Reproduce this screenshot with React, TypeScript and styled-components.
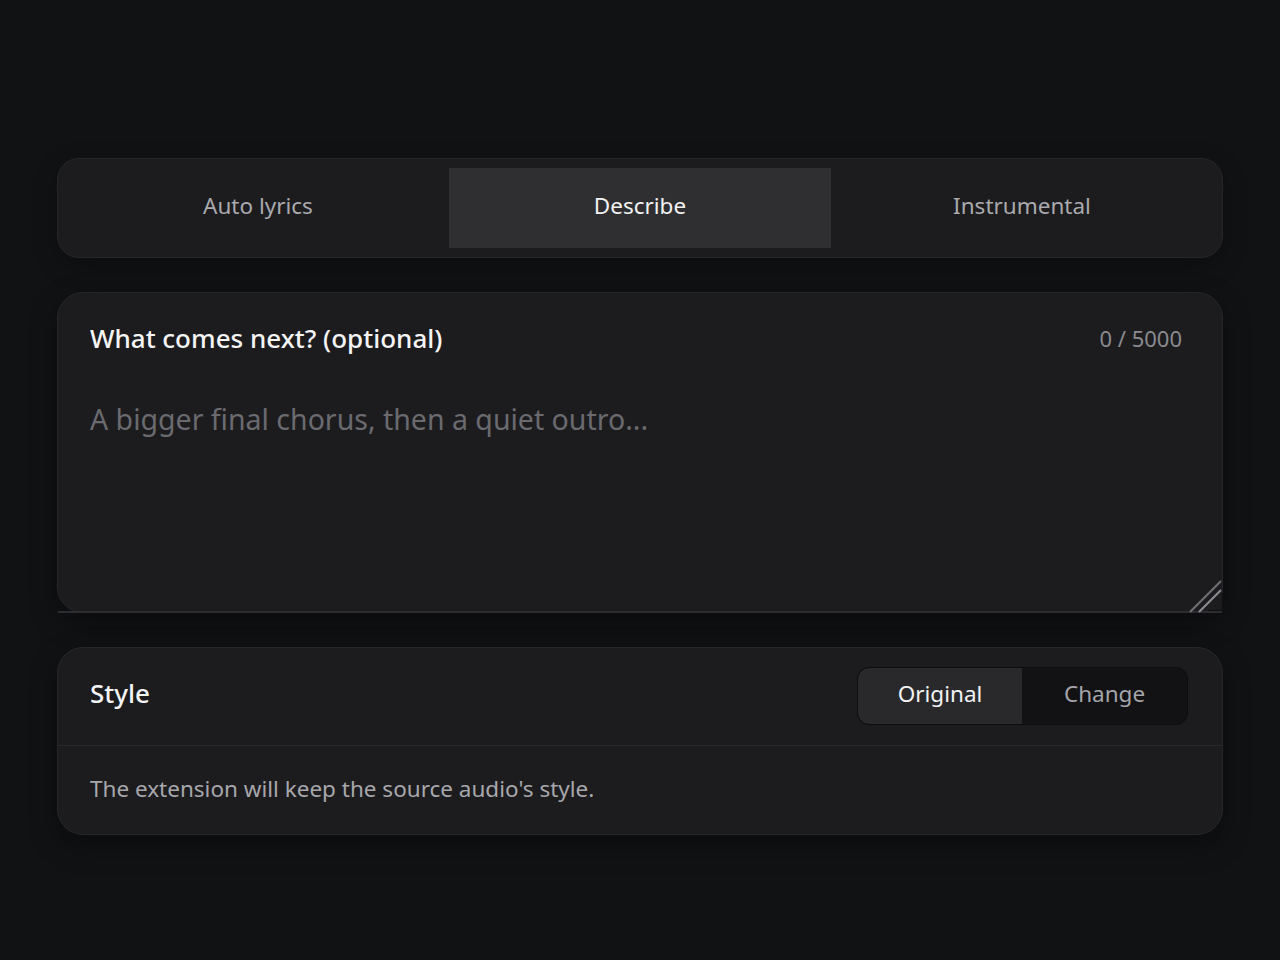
import { useState } from 'react';
import styled, { createGlobalStyle } from 'styled-components';

const GlobalStyle = createGlobalStyle`
  html, body {
    margin: 0;
    padding: 0;
    background: #111214;
    font-family: "Noto Sans", "Open Sans", sans-serif;
    -webkit-font-smoothing: antialiased;
  }
`;

const Page = styled.main`
  min-height: 960px;
  box-sizing: border-box;
  padding: 158px 57px;
  display: flex;
  flex-direction: column;
  gap: 34px;
`;

const TabBar = styled.div`
  display: grid;
  grid-template-columns: repeat(3, 1fr);
  padding: 9px;
  border: 1px solid #26272a;
  border-radius: 22px;
  background: #1c1c1f;
  box-shadow: 0 8px 24px rgba(0, 0, 0, 0.25);
`;

const Tab = styled.button<{ $active?: boolean }>`
  height: 80px;
  padding: 0 0 5px;
  border: none;
  border-radius: 0;
  background: ${(p) => (p.$active ? '#2f2f32' : 'transparent')};
  color: ${(p) => (p.$active ? '#f2f2f3' : '#a9a9ae')};
  font-family: inherit;
  font-size: 22.5px;
  cursor: pointer;
`;

const Card = styled.section`
  position: relative;
  border: 1px solid #26272a;
  border-radius: 26px;
  background: #1c1c1f;
  box-shadow: 0 10px 28px rgba(0, 0, 0, 0.35);
`;

const FieldHeader = styled.div`
  display: flex;
  align-items: center;
  justify-content: space-between;
  padding: 29px 40px 0 32px;
  height: 32px;
`;

const Title = styled.h2`
  margin: 0;
  font-size: 26px;
  font-weight: 500;
  color: #f4f4f5;
`;

const StyleTitle = styled(Title)`
  margin-bottom: 6px;
`;

const Counter = styled.span`
  font-size: 22px;
  color: #8a8a8f;
`;

const Input = styled.textarea`
  display: block;
  box-sizing: border-box;
  width: 100%;
  height: 227px;
  margin-top: 32px;
  margin-bottom: -1px;
  padding: 14px 32px;
  border: none;
  border-bottom: 2px solid #2d2d31;
  background: transparent;
  color: #f4f4f5;
  font-family: inherit;
  font-size: 28.5px;
  line-height: 38px;
  resize: vertical;
  outline: none;
  color-scheme: dark;

  &::placeholder {
    color: #6a6a6f;
  }
`;

const Grip = styled.svg`
  position: absolute;
  right: 0;
  bottom: -1px;
  width: 34px;
  height: 34px;
  pointer-events: none;
`;

const StyleHeader = styled.div`
  display: flex;
  align-items: center;
  justify-content: space-between;
  padding: 19px 34px 20px 32px;
  border-bottom: 1px solid #2a2a2e;
`;

const Segmented = styled.div`
  display: grid;
  grid-template-columns: 164px 165px;
  border: 1px solid #0d0d0f;
  border-radius: 12px;
  background: #121214;
  overflow: hidden;
`;

const Segment = styled.button<{ $active?: boolean }>`
  height: 56px;
  padding: 0 0 6px;
  border: none;
  border-radius: ${(p) => (p.$active ? '11px 0 0 11px' : '0')};
  background: ${(p) => (p.$active ? '#29292c' : 'transparent')};
  color: ${(p) => (p.$active ? '#f2f2f3' : '#a4a4a9')};
  font-family: inherit;
  font-size: 22.5px;
  cursor: pointer;
`;

const Note = styled.p`
  margin: 0;
  padding: 27px 32px 29px;
  font-size: 22.5px;
  line-height: 32px;
  color: #a7a7ac;
`;

const tabs = ['Auto lyrics', 'Describe', 'Instrumental'];

export default function App() {
  const [tab, setTab] = useState('Describe');
  const [style, setStyle] = useState('Original');
  const [text, setText] = useState('');

  return (
    <>
      <GlobalStyle />
      <Page>
        <TabBar>
          {tabs.map((t) => (
            <Tab key={t} $active={t === tab} onClick={() => setTab(t)}>
              {t}
            </Tab>
          ))}
        </TabBar>

        <Card>
          <FieldHeader>
            <Title>What comes next? (optional)</Title>
            <Counter>{text.length} / 5000</Counter>
          </FieldHeader>
          <Input
            value={text}
            maxLength={5000}
            placeholder="A bigger final chorus, then a quiet outro..."
            onChange={(e) => setText(e.target.value)}
          />
          {/* larger resize grip drawn over the native one */}
          <Grip viewBox="0 0 34 34">
            <rect x="14" y="14" width="20" height="17" fill="#1c1c1f" />
            <path d="M2 33 L33 2" stroke="#6e6e72" strokeWidth="2.2" />
            <path d="M11 33 L33 11" stroke="#8c8c90" strokeWidth="2.2" />
          </Grip>
        </Card>

        <Card>
          <StyleHeader>
            <StyleTitle>Style</StyleTitle>
            <Segmented>
              {['Original', 'Change'].map((s) => (
                <Segment key={s} $active={s === style} onClick={() => setStyle(s)}>
                  {s}
                </Segment>
              ))}
            </Segmented>
          </StyleHeader>
          <Note>The extension will keep the source audio's style.</Note>
        </Card>
      </Page>
    </>
  );
}
